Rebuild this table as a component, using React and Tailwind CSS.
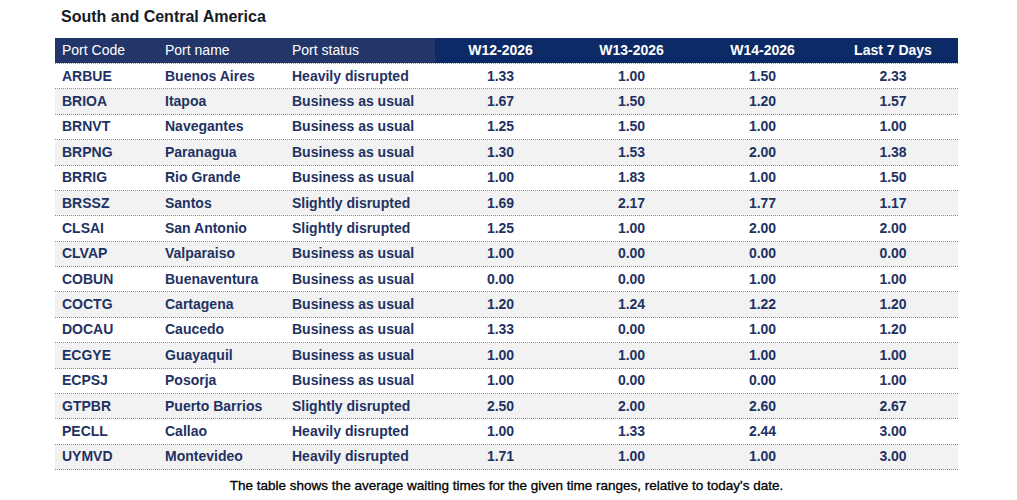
import React from "react";

const rows = [
  ["ARBUE", "Buenos Aires", "Heavily disrupted", "1.33", "1.00", "1.50", "2.33"],
  ["BRIOA", "Itapoa", "Business as usual", "1.67", "1.50", "1.20", "1.57"],
  ["BRNVT", "Navegantes", "Business as usual", "1.25", "1.50", "1.00", "1.00"],
  ["BRPNG", "Paranagua", "Business as usual", "1.30", "1.53", "2.00", "1.38"],
  ["BRRIG", "Rio Grande", "Business as usual", "1.00", "1.83", "1.00", "1.50"],
  ["BRSSZ", "Santos", "Slightly disrupted", "1.69", "2.17", "1.77", "1.17"],
  ["CLSAI", "San Antonio", "Slightly disrupted", "1.25", "1.00", "2.00", "2.00"],
  ["CLVAP", "Valparaiso", "Business as usual", "1.00", "0.00", "0.00", "0.00"],
  ["COBUN", "Buenaventura", "Business as usual", "0.00", "0.00", "1.00", "1.00"],
  ["COCTG", "Cartagena", "Business as usual", "1.20", "1.24", "1.22", "1.20"],
  ["DOCAU", "Caucedo", "Business as usual", "1.33", "0.00", "1.00", "1.20"],
  ["ECGYE", "Guayaquil", "Business as usual", "1.00", "1.00", "1.00", "1.00"],
  ["ECPSJ", "Posorja", "Business as usual", "1.00", "0.00", "0.00", "1.00"],
  ["GTPBR", "Puerto Barrios", "Slightly disrupted", "2.50", "2.00", "2.60", "2.67"],
  ["PECLL", "Callao", "Heavily disrupted", "1.00", "1.33", "2.44", "3.00"],
  ["UYMVD", "Montevideo", "Heavily disrupted", "1.71", "1.00", "1.00", "3.00"],
];

const cols = "grid grid-cols-[103px_127px_150px_131px_131px_131px_130px]";

export default function App() {
  return (
    <div className="w-[1017px] h-[500px] bg-white overflow-hidden" style={{ fontFamily: '"Liberation Sans", Arial, sans-serif' }}>
      <div className="pt-[7px] pl-[61px] h-[38px]">
        <h1 className="text-[16px] leading-[20px] font-bold text-[#161a26]">South and Central America</h1>
      </div>
      <div className="ml-[55px] w-[903px]">
        <div className={`${cols} h-[26px] border-b border-dotted border-[#9aa0aa] text-white text-[14px] leading-[25px]`}>
          <div className="bg-[#22366a] pl-[7px]">Port Code</div>
          <div className="bg-[#22366a] pl-[7px]">Port name</div>
          <div className="bg-[#22366a] pl-[7px]">Port status</div>
          <div className="bg-[#0c2b66] text-center font-bold">W12-2026</div>
          <div className="bg-[#0c2b66] text-center font-bold">W13-2026</div>
          <div className="bg-[#0c2b66] text-center font-bold">W14-2026</div>
          <div className="bg-[#0c2b66] text-center font-bold">Last 7 Days</div>
        </div>
        {rows.map((r, i) => (
          <div
            key={r[0]}
            className={`${cols} h-[25.375px] items-center border-b border-dotted border-[#8c8c8c] text-[14px] font-bold text-[#1f3263] ${i % 2 === 1 ? "bg-[#f2f2f2]" : "bg-white"}`}
          >
            <div className="pl-[7px]">{r[0]}</div>
            <div className="pl-[7px]">{r[1]}</div>
            <div className="pl-[7px]">{r[2]}</div>
            <div className="text-center">{r[3]}</div>
            <div className="text-center">{r[4]}</div>
            <div className="text-center">{r[5]}</div>
            <div className="text-center">{r[6]}</div>
          </div>
        ))}
      </div>
      <p className="mt-[8px] ml-[55px] w-[903px] text-center text-[13.5px] leading-[16px] text-black" style={{ WebkitTextStroke: "0.3px black" }}>
        The table shows the average waiting times for the given time ranges, relative to today's date.
      </p>
    </div>
  );
}
